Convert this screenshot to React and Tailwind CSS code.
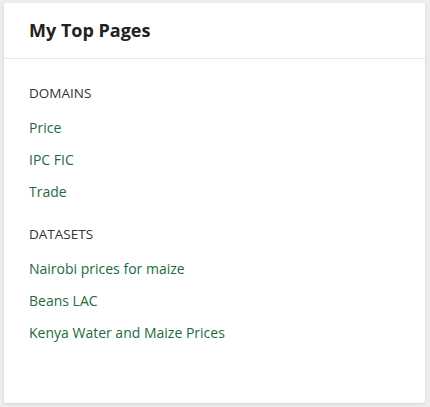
const sections = [
  { title: 'DOMAINS', links: ['Price', 'IPC FIC', 'Trade'] },
  { title: 'DATASETS', links: ['Nairobi prices for maize', 'Beans LAC', 'Kenya Water and Maize Prices'] },
];

const App = () => {
  return (
    <div
      className="min-h-screen bg-[#ededed] pt-[3px] pl-[4px] pr-[5px]"
      style={{ fontFamily: '"Open Sans", "Noto Sans", sans-serif' }}
    >
      <div className="h-[400px] bg-white rounded-[2px] shadow-[0_1px_3px_rgba(0,0,0,0.12)]">
        {/* Header */}
        <div className="h-[56px] flex items-center px-[25px] border-b border-[#e6e6e6]">
          <h2 className="text-[18px] font-bold text-[#222]">My Top Pages</h2>
        </div>

        {/* Body */}
        <div className="px-[25px] pt-[24px]">
          {sections.map((section, i) => (
            <div key={section.title} className={i > 0 ? 'mt-[22px]' : ''}>
              <div className="text-[13.5px] leading-5 text-[#333]">{section.title}</div>
              <ul className="mt-[15px] flex flex-col gap-[12px]">
                {section.links.map((link) => (
                  <li key={link} className="text-[14px] leading-5">
                    <a href="#" className="block text-[#1b6b3e]">
                      {link}
                    </a>
                  </li>
                ))}
              </ul>
            </div>
          ))}
        </div>
      </div>
    </div>
  );
};

export default App;
